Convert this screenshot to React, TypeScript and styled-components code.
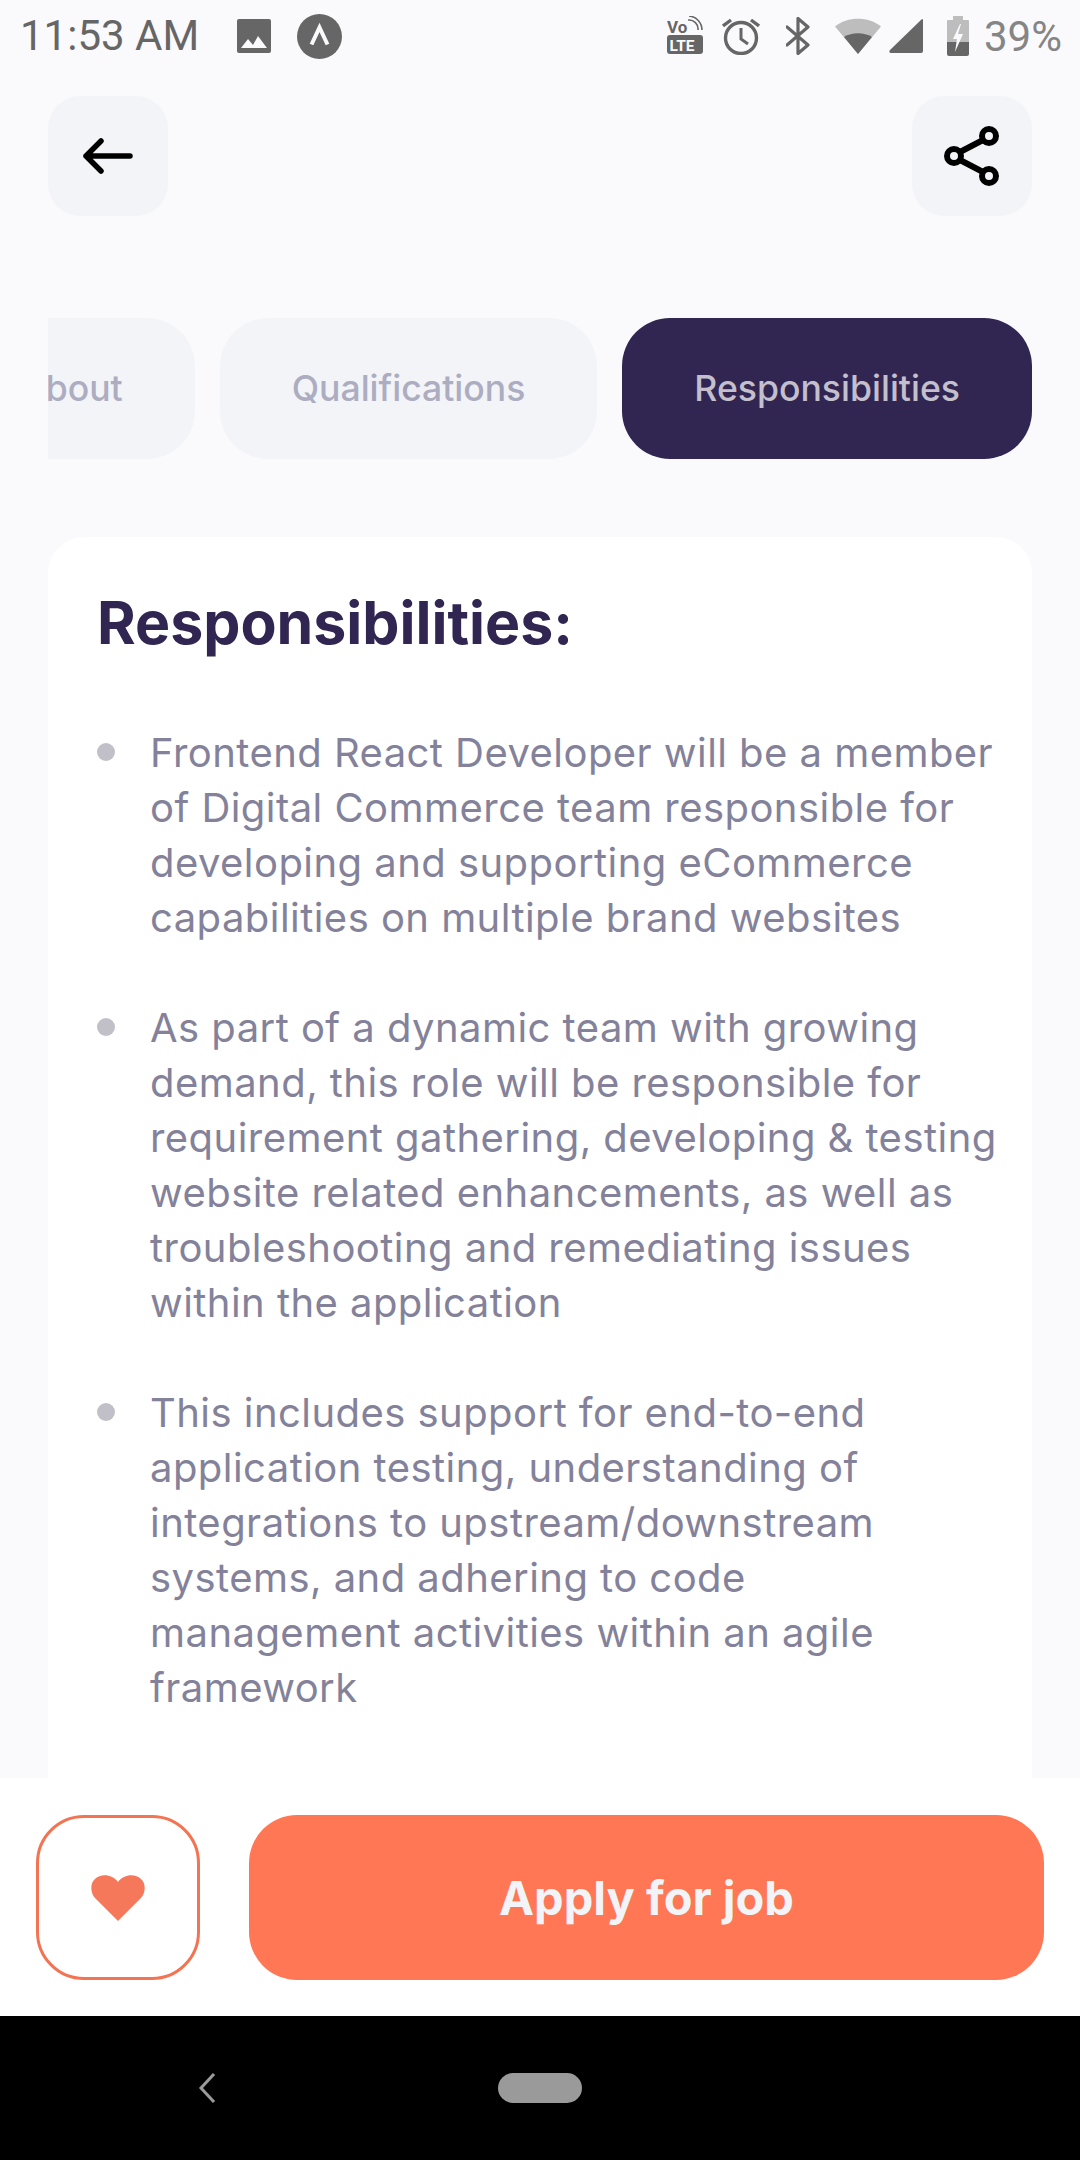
import React from "react";
import styled, { createGlobalStyle } from "styled-components";

const Global = createGlobalStyle`
  html, body { margin: 0; padding: 0; background: #fafafc; }
  * { box-sizing: border-box; }
`;

const Screen = styled.div`
  width: 1080px;
  height: 2160px;
  display: flex;
  flex-direction: column;
  overflow: hidden;
  background: #fafafc;
  font-family: Inter, "Liberation Sans", sans-serif;
`;

const StatusBar = styled.div`
  height: 72px;
  flex: none;
  display: flex;
  align-items: center;
  padding: 0 18px 0 20px;
  font-family: Roboto, sans-serif;
  font-size: 42px;
  color: #666666;
`;

const Time = styled.span`
  width: 217px;
  line-height: 74px;
`;

const StatusRight = styled.div`
  margin-left: auto;
  display: flex;
  align-items: center;
`;

const Percent = styled.span`
  color: #858585;
  margin-left: 15px;
`;

const StatusIcon = styled.svg<{ $left?: number }>`
  display: block;
  flex: none;
  margin-left: ${(p) => p.$left ?? 0}px;
`;

const Header = styled.div`
  flex: none;
  display: flex;
  justify-content: space-between;
  padding: 24px 48px 0;
`;

const SquareButton = styled.div`
  width: 120px;
  height: 120px;
  border-radius: 32px;
  background: #f3f4f8;
  display: flex;
  align-items: center;
  justify-content: center;
`;

const Tabs = styled.div`
  flex: none;
  margin: 102px 48px 0;
  display: flex;
  justify-content: flex-end;
  gap: 25px;
  overflow: hidden;
`;

const Tab = styled.div<{ $active?: boolean }>`
  flex: none;
  height: 141px;
  display: flex;
  align-items: center;
  justify-content: center;
  border-radius: 48px;
  font-size: 35.6px;
  font-weight: 500;
  background: ${(p) => (p.$active ? "#312651" : "#f3f4f8")};
  color: ${(p) => (p.$active ? "#c3bfcc" : "#acadc1")};
  padding: 0 72px;
`;

const Card = styled.div`
  flex: 1;
  min-height: 0;
  overflow: hidden;
  margin: 78px 48px 0;
  padding: 50px 0 0 49px;
  background: #ffffff;
  border-radius: 36px 36px 0 0;
`;

const Title = styled.h1`
  margin: 0 0 66px;
  font-size: 59px;
  line-height: 72px;
  font-weight: 700;
  color: #312651;
`;

const List = styled.ul`
  margin: 0;
  padding: 0;
  list-style: none;
  display: flex;
  flex-direction: column;
  gap: 55px;
`;

const Item = styled.li`
  display: flex;
  gap: 35px;
`;

const Dot = styled.span`
  flex: none;
  width: 18px;
  height: 18px;
  border-radius: 50%;
  margin-top: 18px;
  background: #c1c0c8;
`;

const ItemText = styled.span`
  font-size: 40px;
  letter-spacing: 0.45px;
  line-height: 55px;
  color: #83829a;
  white-space: pre;
`;

const Footer = styled.div`
  flex: none;
  height: 238px;
  background: #ffffff;
  display: flex;
  gap: 49px;
  padding: 37px 36px 0;
`;

const HeartButton = styled.div`
  flex: none;
  width: 164px;
  height: 165px;
  border: 3px solid #f37453;
  border-radius: 48px;
  display: flex;
  align-items: center;
  justify-content: center;
`;

const ApplyButton = styled.div`
  flex: 1;
  height: 165px;
  border-radius: 48px;
  background: #ff7754;
  color: #f3f4f8;
  font-size: 47px;
  font-weight: 700;
  display: flex;
  align-items: center;
  justify-content: center;
`;

const NavBar = styled.div`
  flex: none;
  height: 144px;
  background: #000000;
  position: relative;
  display: flex;
  align-items: center;
  justify-content: center;
`;

const NavBack = styled.svg`
  position: absolute;
  left: 198px;
  top: 57px;
`;

const NavPill = styled.div`
  width: 84px;
  height: 30px;
  border-radius: 15px;
  background: #9a9a9a;
`;

const items = [
  "Frontend React Developer will be a member\nof Digital Commerce team responsible for\ndeveloping and supporting eCommerce\ncapabilities on multiple brand websites",
  "As part of a dynamic team with growing\ndemand, this role will be responsible for\nrequirement gathering, developing & testing\nwebsite related enhancements, as well as\ntroubleshooting and remediating issues\nwithin the application",
  "This includes support for end-to-end\napplication testing, understanding of\nintegrations to upstream/downstream\nsystems, and adhering to code\nmanagement activities within an agile\nframework",
];

export default function App() {
  return (
    <Screen>
      <Global />
      <StatusBar>
        <Time>11:53 AM</Time>
        <StatusIcon width="34" height="34" viewBox="0 0 34 34">
          <path fill="#666" d="M2 0h30a2 2 0 0 1 2 2v30a2 2 0 0 1-2 2H2a2 2 0 0 1-2-2V2a2 2 0 0 1 2-2z" />
          <path fill="#fafafc" d="M4 29l7-9 5 6 5-9 9 12z" />
        </StatusIcon>
        <StatusIcon width="45" height="45" viewBox="0 0 45 45" $left={26}>
          <circle cx="22.5" cy="22.5" r="22.5" fill="#666" />
          <path d="M14.5 30.5l8-17 8 17" fill="none" stroke="#fafafc" strokeWidth="4" />
        </StatusIcon>
        <StatusRight>
          <StatusIcon width="36" height="40" viewBox="0 0 36 40">
            <text x="0" y="17" fontFamily="Roboto" fontWeight="700" fontSize="17" fill="#666">Vo</text>
            <path d="M21 4a9 9 0 0 1 10 10M22 0a14 14 0 0 1 13 14" fill="none" stroke="#666" strokeWidth="1.6" />
            <rect x="0" y="19" width="36" height="19" rx="3" fill="#666" />
            <text x="2.5" y="35" fontFamily="Roboto" fontWeight="700" fontSize="15.5" fill="#fafafc">LTE</text>
          </StatusIcon>
          <StatusIcon width="38" height="38" viewBox="0 0 38 38" $left={19}>
            <circle cx="19" cy="21" r="15.5" fill="none" stroke="#666" strokeWidth="3.4" />
            <path d="M19 11v11l7 5" fill="none" stroke="#666" strokeWidth="3" />
            <path d="M1 9l8-6M37 9l-8-6" fill="none" stroke="#666" strokeWidth="3.4" />
          </StatusIcon>
          <StatusIcon width="24" height="38" viewBox="0 0 24 38" $left={26}>
            <path d="M1 10l21 18-10 8.500V1.500l10 8.500L1 28" fill="none" stroke="#666" strokeWidth="3.2" strokeLinejoin="round" strokeLinecap="round" />
          </StatusIcon>
          <StatusIcon width="46" height="38" viewBox="0 0 46 38" $left={25}>
            <path d="M0 9.500C12-1 34-1 46 9.500L23 37z" fill="#bdbdbd" />
            <path d="M9 20c8-5 20-5 28 0L23 37z" fill="#666" />
          </StatusIcon>
          <StatusIcon width="34" height="34" viewBox="0 0 34 34" $left={8}>
            <path d="M33 0a1 1 0 0 1 1 1v31a2 2 0 0 1-2 2H2c-2 0-2-2-1-3z" fill="#666" />
          </StatusIcon>
          <StatusIcon width="22" height="40" viewBox="0 0 22 40" $left={24}>
            <path d="M6 0h10v4h5a1 1 0 0 1 1 1v21H0V5a1 1 0 0 1 1-1h5z" fill="#bdbdbd" />
            <path d="M0 26h22v12a2 2 0 0 1-2 2H2a2 2 0 0 1-2-2z" fill="#666" />
            <path d="M13 8l-7 15h4l-2 13 8-18h-5l3-10z" fill="#fafafc" />
          </StatusIcon>
          <Percent>39%</Percent>
        </StatusRight>
      </StatusBar>
      <Header>
        <SquareButton>
          <svg width="52" height="36" viewBox="0 0 52 36" fill="none" stroke="#000" strokeWidth="5.500" strokeLinecap="round" strokeLinejoin="round">
            <path d="M48 18H4M19 3L4 18l15 15" />
          </svg>
        </SquareButton>
        <SquareButton>
          <svg width="56" height="62" viewBox="0 0 56 62" fill="none" stroke="#000" strokeWidth="6">
            <circle cx="45" cy="11" r="7" />
            <circle cx="10" cy="31" r="7" />
            <circle cx="45" cy="51" r="7" />
            <path d="M16 27l23-12M16 35l23 12" />
          </svg>
        </SquareButton>
      </Header>
      <Tabs>
        <Tab>About</Tab>
        <Tab>Qualifications</Tab>
        <Tab $active>Responsibilities</Tab>
      </Tabs>
      <Card>
        <Title>Responsibilities:</Title>
        <List>
          {items.map((t) => (
            <Item key={t}>
              <Dot />
              <ItemText>{t}</ItemText>
            </Item>
          ))}
        </List>
      </Card>
      <Footer>
        <HeartButton>
          <svg width="54" height="46" viewBox="0 0 54 46">
            <path fill="#f5785a" d="M27 46L4.500 23.500C-1 18-1 8 4 4 10-1.500 21-1 27 7 33-1 44-1.500 50 4c5 4 5 14-.5 19.500z" />
          </svg>
        </HeartButton>
        <ApplyButton>Apply for job</ApplyButton>
      </Footer>
      <NavBar>
        <NavBack width="18" height="30" viewBox="0 0 18 30">
          <path d="M16 1L3 15l13 14" fill="none" stroke="#9a9a9a" strokeWidth="3" />
        </NavBack>
        <NavPill />
      </NavBar>
    </Screen>
  );
}
